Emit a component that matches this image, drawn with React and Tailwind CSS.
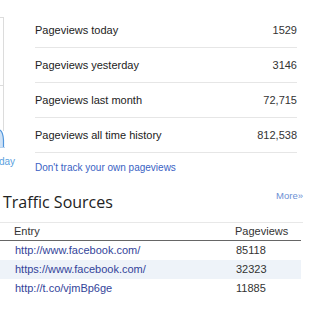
export default function App() {
  const stats = [
    ["Pageviews today", "1529"],
    ["Pageviews yesterday", "3146"],
    ["Pageviews last month", "72,715"],
    ["Pageviews all time history", "812,538"],
  ];
  const rows = [
    ["http://www.facebook.com/", "85118"],
    ["https://www.facebook.com/", "32323"],
    ["http://t.co/vjmBp6ge", "11885"],
  ];
  return (
    <div className="w-[320px] h-[312px] bg-white overflow-hidden font-['Liberation_Sans',Arial,sans-serif]">
      <div className="flex pt-[13px]">
        <div className="w-[35px] flex flex-col overflow-hidden">
          <svg width="35" height="140" viewBox="0 0 35 140" className="block">
            <line x1="0" y1="4.5" x2="4" y2="4.5" stroke="#dcdcdc" strokeWidth="1" />
            <line x1="0" y1="72.5" x2="4" y2="72.5" stroke="#dcdcdc" strokeWidth="1" />
            <line x1="3.5" y1="4" x2="3.5" y2="118" stroke="#dcdcdc" strokeWidth="1" />
            <path d="M0 117 Q3 119 3.5 127 L3.5 134 L0 134 Z" fill="#cfe2f6" />
            <path d="M0 117 Q3 119 3.5 127 L3.5 134" fill="none" stroke="#4f95dc" strokeWidth="1.2" />
            <line x1="0" y1="134.5" x2="5" y2="134.5" stroke="#b9d3ee" strokeWidth="1" />
          </svg>
          <div className="mt-[3px] -ml-[1px] text-[10px] leading-[12px] text-[#5aa1de]">day</div>
        </div>
        <div className="w-[262px]">
          {stats.map(([label, value]) => (
            <div
              key={label}
              className="h-[35px] border-b border-[#e6e6e6] flex items-center justify-between text-[11px] leading-[13px]"
            >
              <span className="text-[#222]">{label}</span>
              <span className="text-[#333]">{value}</span>
            </div>
          ))}
          <div className="mt-[9px] text-[10px] leading-[12px] text-[#3a62c4]">
            Don't track your own pageviews
          </div>
        </div>
      </div>

      <div className="flex items-start justify-between pl-[3px] pr-[17px] mt-[16px]">
        <h2 className="mt-[1px] text-[16px] leading-[22px] text-[#222] font-['Open_Sans',sans-serif] font-normal">
          Traffic Sources
        </h2>
        <span className="text-[9.5px] leading-[12px] text-[#6b8fd4]">More»</span>
      </div>

      <div className="mt-[9px] w-[303px] border-t border-[#e8e8e8]">
        <div className="w-[301px]">
          <div className="flex h-[18px] items-center border-b border-[#666] text-[11px] leading-[13px] text-[#333]">
            <div className="w-[235px] pl-[14px]">Entry</div>
            <div>Pageviews</div>
          </div>
          {rows.map(([url, n], i) => (
            <div
              key={url}
              className={
                "flex h-[19px] items-center text-[11px] leading-[13px] " +
                (i === 1 ? "bg-[#eef3f9]" : "bg-white")
              }
            >
              <div className="w-[236px] pl-[15px] text-[#33449a]">{url}</div>
              <div className="text-[#333]">{n}</div>
            </div>
          ))}
        </div>
      </div>
    </div>
  );
}
